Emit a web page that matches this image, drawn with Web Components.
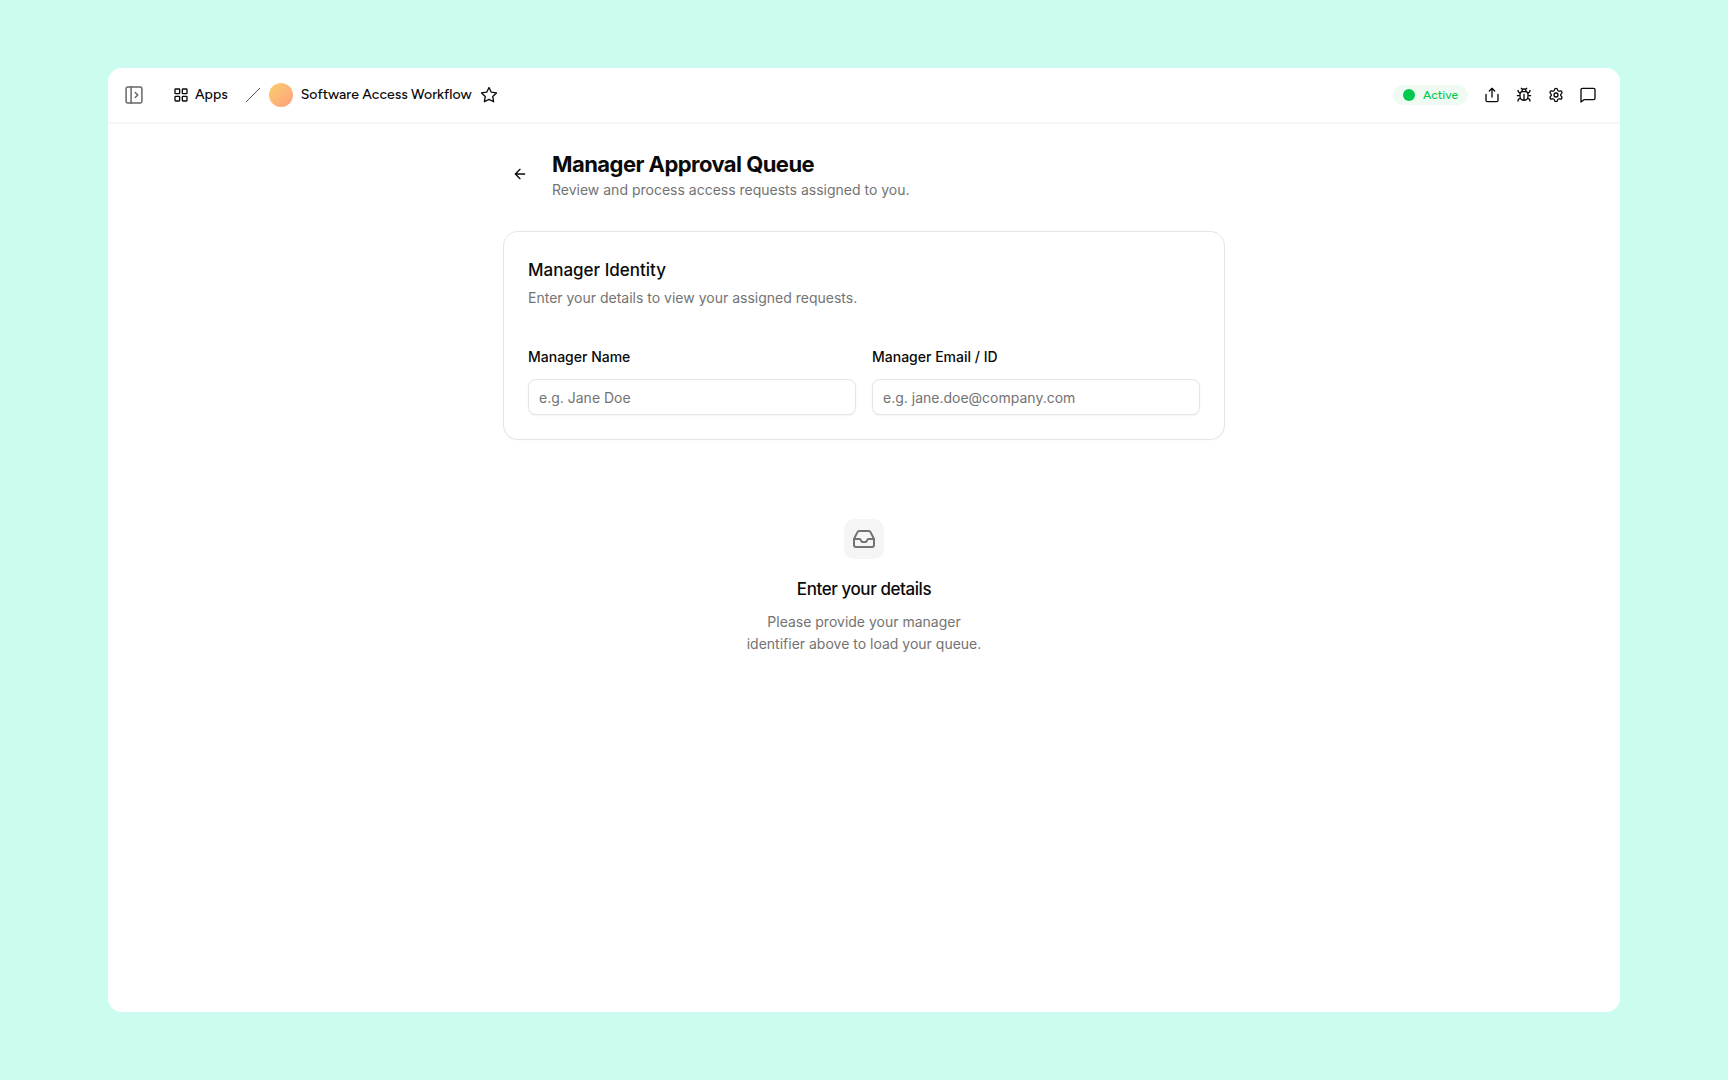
<!DOCTYPE html>
<html lang="en">
<head>
<meta charset="utf-8">
<meta name="viewport" content="width=device-width, initial-scale=1">
<title>Software Access Workflow</title>
<style>
    :root {
        --page: #ccfcf0;
        --text: #0a0a0a;
        --muted: #737373;
        --border: #e5e5e5;
        --light-grey: #f5f5f5;
        --green: #00c950;
        --header-font: Figtree, "Open Sans", sans-serif;
    }

    body {
        margin: 0;
        background: var(--page);
        color: var(--text);
        font-family: Inter, "Liberation Sans", sans-serif;
        font-size: 14px;
        line-height: 20px;
    }
</style>
</head>
<body>
<app-window>
    <app-header slot="header" name="Software Access Workflow" status="Active"></app-header>
    <page-heading>
        <span slot="title">Manager Approval Queue</span>
        <span slot="subtitle">Review and process access requests assigned to you.</span>
    </page-heading>
    <form-card>
        <span slot="title">Manager Identity</span>
        <span slot="description">Enter your details to view your assigned requests.</span>
        <text-field label="Manager Name" placeholder="e.g. Jane Doe"></text-field>
        <text-field label="Manager Email / ID" placeholder="e.g. jane.doe@company.com"></text-field>
    </form-card>
    <empty-state>
        <span slot="title">Enter your details</span>
        Please provide your manager identifier above to load your queue.
    </empty-state>
</app-window>

<script>
const icons = {
    sidebar: '<rect x="2.5" y="2.5" width="19" height="19" rx="2"/><path d="M8.5 2.5v19M13.5 9l3 3-3 3"/>',
    grid: '<rect x="3" y="3" width="7" height="7" rx="1"/><rect x="14" y="3" width="7" height="7" rx="1"/><rect x="14" y="14" width="7" height="7" rx="1"/><rect x="3" y="14" width="7" height="7" rx="1"/>',
    slash: '<path d="M22 2 2 22"/>',
    star: '<path d="m12 2 3.09 6.26L22 9.27l-5 4.87 1.18 6.88L12 17.77l-6.18 3.25L7 14.14 2 9.27l6.91-1.01z"/>',
    share: '<path d="M12 2v13M16 6l-4-4-4 4M3 11v9a2 2 0 0 0 2 2h14a2 2 0 0 0 2-2v-9"/>',
    bug: '<path d="M12 20v-9M14 7a4 4 0 0 1 4 4v3a6 6 0 0 1-12 0v-3a4 4 0 0 1 4-4zM14.12 3.88 16 2M21 21a4 4 0 0 0-3.81-4M21 5a4 4 0 0 1-3.55 3.97M22 13h-4M3 21a4 4 0 0 1 3.81-4M3 5a4 4 0 0 0 3.55 3.97M6 13H2M8 2l1.88 1.88M9 7.13V6a3 3 0 1 1 6 0v1.13"/>',
    settings: '<path d="M9.671 4.136a2.34 2.34 0 0 1 4.659 0 2.34 2.34 0 0 0 3.319 1.915 2.34 2.34 0 0 1 2.33 4.033 2.34 2.34 0 0 0 0 3.831 2.34 2.34 0 0 1-2.33 4.033 2.34 2.34 0 0 0-3.319 1.915 2.34 2.34 0 0 1-4.659 0 2.34 2.34 0 0 0-3.32-1.915 2.34 2.34 0 0 1-2.33-4.033 2.34 2.34 0 0 0 0-3.831A2.34 2.34 0 0 1 6.35 6.051a2.34 2.34 0 0 0 3.319-1.915"/><circle cx="12" cy="12" r="3"/>',
    message: '<path d="M22.500 4V17a2 2 0 0 1-2 2H6l-4.500 3.500V4a2 2 0 0 1 2-2h17a2 2 0 0 1 2 2z"/>',
    back: '<path d="m12 19-7-7 7-7M19 12H5"/>',
    inbox: '<path d="M22 12h-6l-2 3h-4l-2-3H2"/><path d="M5.45 5.11 2 12v6a2 2 0 0 0 2 2h16a2 2 0 0 0 2-2v-6l-3.45-6.89A2 2 0 0 0 16.76 4H7.24a2 2 0 0 0-1.79 1.11z"/>'
};

const createTemplate = (html) => {
    const template = document.createElement('template');
    template.innerHTML = html;
    return template;
};

class BaseElement extends HTMLElement {
    connectedCallback() {
        if (!this.shadowRoot) {
            this.attachShadow({mode: 'open'});
            this.shadowRoot.appendChild(this.constructor.template.content.cloneNode(true));
            this.render();
        }
    }

    render() {}
}

class AppIcon extends BaseElement {
    static template = createTemplate(`
        <style>
            :host {
                display: block;
                flex: none;
                width: 16px;
                height: 16px;
            }

            svg {
                display: block;
                width: 100%;
                height: 100%;
                fill: none;
                stroke: currentColor;
                stroke-width: var(--stroke, 2);
                stroke-linecap: round;
                stroke-linejoin: round;
                overflow: visible;
            }
        </style>
        <svg viewBox="0 0 24 24" aria-hidden="true"></svg>
    `);

    render() {
        this.shadowRoot.querySelector('svg').innerHTML = icons[this.getAttribute('name')];
    }
}

class AppWindow extends BaseElement {
    static template = createTemplate(`
        <style>
            :host {
                display: flex;
                box-sizing: border-box;
                min-height: 100vh;
                padding: 68px 108px;
            }

            .window {
                flex: 1;
                background: white;
                border-radius: 14px;
            }

            main {
                display: flex;
                flex-direction: column;
                gap: 32px;
                max-width: 720px;
                margin: 0 auto;
                padding: 24px;
            }
        </style>
        <div class="window">
            <slot name="header"></slot>
            <main><slot></slot></main>
        </div>
    `);
}

class AppHeader extends BaseElement {
    static template = createTemplate(`
        <style>
            :host {
                display: block;
                border-bottom: 2px solid var(--light-grey);
                font-family: var(--header-font);
                font-weight: 500;
            }

            header, nav, .actions, a, .status {
                display: flex;
                align-items: center;
            }

            header {
                justify-content: space-between;
                height: 54px;
                padding: 0 24px 0 16px;
            }

            button {
                padding: 0;
                border: 0;
                background: none;
                color: inherit;
                cursor: pointer;
            }

            a {
                gap: 6px;
                color: inherit;
                text-decoration: none;
            }

            .toggle {
                --stroke: 1.8;
                margin-right: 29px;
                color: #666;
            }

            .toggle app-icon {
                width: 20px;
                height: 20px;
            }

            .slash {
                --stroke: 1.5;
                margin: 0 8px 0 17px;
                color: #555;
            }

            .app {
                gap: 8px;
                margin-right: 8px;
            }

            .avatar {
                width: 24px;
                height: 24px;
                border-radius: 50%;
                background: linear-gradient(135deg, #f8d06b, #ff9f80);
            }

            .star {
                --stroke: 1.8;
            }

            .star app-icon {
                width: 18px;
                height: 18px;
            }

            .actions {
                gap: 16px;
            }

            .status {
                gap: 8px;
                height: 20px;
                padding: 0 10px;
                border-radius: 10px;
                background: #effaf2;
                color: var(--green);
                font-size: 12px;
            }

            .dot {
                width: 12px;
                height: 12px;
                border-radius: 50%;
                background: var(--green);
            }
        </style>
        <header>
            <nav aria-label="Breadcrumb">
                <button class="toggle" aria-label="Open sidebar"><app-icon name="sidebar"></app-icon></button>
                <a href="#apps"><app-icon name="grid"></app-icon>Apps</a>
                <app-icon class="slash" name="slash"></app-icon>
                <a class="app" href="#app"><span class="avatar"></span><span class="name"></span></a>
                <button class="star" aria-label="Favorite"><app-icon name="star"></app-icon></button>
            </nav>
            <div class="actions">
                <span class="status"><span class="dot"></span><span class="status-text"></span></span>
                <button aria-label="Share"><app-icon name="share"></app-icon></button>
                <button aria-label="Report a bug"><app-icon name="bug"></app-icon></button>
                <button aria-label="Settings"><app-icon name="settings"></app-icon></button>
                <button aria-label="Comments"><app-icon name="message"></app-icon></button>
            </div>
        </header>
    `);

    render() {
        this.shadowRoot.querySelector('.name').textContent = this.getAttribute('name');
        this.shadowRoot.querySelector('.status-text').textContent = this.getAttribute('status');
    }
}

class PageHeading extends BaseElement {
    static template = createTemplate(`
        <style>
            :host {
                display: flex;
                align-items: center;
                gap: 16px;
            }

            button {
                display: flex;
                align-items: center;
                justify-content: center;
                width: 32px;
                height: 32px;
                padding: 0;
                border: 0;
                background: none;
                color: inherit;
                cursor: pointer;
            }

            h1, p {
                margin: 0;
            }

            h1 {
                font-size: 22px;
                line-height: 32px;
                font-weight: 700;
                letter-spacing: -0.025em;
            }

            p {
                color: var(--muted);
            }
        </style>
        <button aria-label="Back"><app-icon name="back"></app-icon></button>
        <div>
            <h1><slot name="title"></slot></h1>
            <p><slot name="subtitle"></slot></p>
        </div>
    `);
}

class FormCard extends BaseElement {
    static template = createTemplate(`
        <style>
            :host {
                display: block;
                padding: 24px;
                border-radius: 14px;
                box-shadow: 0 0 0 1px var(--border), 0 1px 2px rgba(0, 0, 0, 0.06);
            }

            h2, p {
                margin: 0;
            }

            h2 {
                font-size: 17px;
                line-height: 28px;
                font-weight: 500;
            }

            p {
                padding: 4px 0 40px;
                color: var(--muted);
            }

            .fields {
                display: grid;
                grid-template-columns: 1fr 1fr;
                gap: 16px;
            }
        </style>
        <h2><slot name="title"></slot></h2>
        <p><slot name="description"></slot></p>
        <div class="fields"><slot></slot></div>
    `);
}

class TextField extends BaseElement {
    static template = createTemplate(`
        <style>
            :host {
                display: flex;
                flex-direction: column;
                gap: 14px;
            }

            label {
                line-height: 17px;
                font-weight: 500;
            }

            input {
                box-sizing: border-box;
                width: 100%;
                height: 36px;
                padding: 0 10px;
                border: 1px solid var(--border);
                border-radius: 8px;
                background: white;
                box-shadow: 0 1px 2px rgba(0, 0, 0, 0.05);
                color: inherit;
                font: inherit;
            }

            input::placeholder {
                color: var(--muted);
            }
        </style>
        <label for="field"></label>
        <input id="field" type="text">
    `);

    render() {
        this.shadowRoot.querySelector('label').textContent = this.getAttribute('label');
        this.shadowRoot.querySelector('input').placeholder = this.getAttribute('placeholder');
    }
}

class EmptyState extends BaseElement {
    static template = createTemplate(`
        <style>
            :host {
                display: flex;
                flex-direction: column;
                align-items: center;
                padding: 48px 0;
                text-align: center;
            }

            .media {
                padding: 8px;
                border-radius: 10px;
                background: var(--light-grey);
                color: var(--muted);
            }

            .media app-icon {
                width: 24px;
                height: 24px;
            }

            h3, p {
                margin: 0;
            }

            h3 {
                padding: 16px 0 8px;
                font-size: 17px;
                line-height: 28px;
                font-weight: 500;
                letter-spacing: -0.025em;
            }

            p {
                max-width: 240px;
                color: var(--muted);
                line-height: 22px;
            }
        </style>
        <div class="media"><app-icon name="inbox"></app-icon></div>
        <h3><slot name="title"></slot></h3>
        <p><slot></slot></p>
    `);
}

customElements.define('app-icon', AppIcon);
customElements.define('app-window', AppWindow);
customElements.define('app-header', AppHeader);
customElements.define('page-heading', PageHeading);
customElements.define('form-card', FormCard);
customElements.define('text-field', TextField);
customElements.define('empty-state', EmptyState);
</script>
</body>
</html>
